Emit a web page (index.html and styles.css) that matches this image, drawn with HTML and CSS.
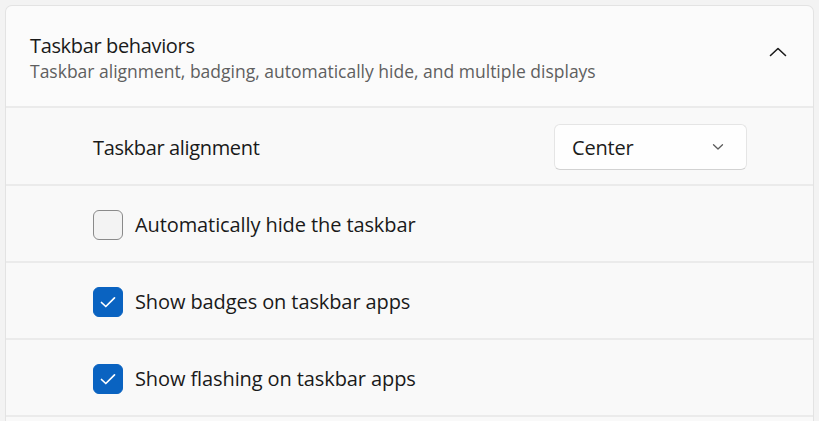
FILE: index.html
```
<!DOCTYPE html>
<html>
<head>
<meta charset="utf-8">
<link rel="stylesheet" href="styles.css">
</head>
<body>
<div class="card">
  <div class="header">
    <div class="htext">
      <div class="title">Taskbar behaviors</div>
      <div class="subtitle">Taskbar alignment, badging, automatically hide, and multiple displays</div>
    </div>
    <svg class="chev-up" width="18" height="10" viewBox="0 0 18 10"><path d="M1.5 8.5 L9 1.5 L16.5 8.5" fill="none" stroke="#1b1b1b" stroke-width="1.6" stroke-linecap="round" stroke-linejoin="round"/></svg>
  </div>
  <div class="row first">
    <div class="label">Taskbar alignment</div>
    <div class="select">
      <span>Center</span>
      <svg width="12" height="8" viewBox="0 0 12 8"><path d="M1.5 1.8 L6 6 L10.5 1.8" fill="none" stroke="#5c5c5c" stroke-width="1.3" stroke-linecap="round" stroke-linejoin="round"/></svg>
    </div>
  </div>
  <div class="row">
    <span class="box"></span>
    <div class="label">Automatically hide the taskbar</div>
  </div>
  <div class="row">
    <span class="box checked"><svg width="18" height="14" viewBox="0 0 18 14"><path d="M2.5 7.5 L6.8 11.5 L15.5 2.8" fill="none" stroke="#fff" stroke-width="1.7" stroke-linecap="round" stroke-linejoin="round"/></svg></span>
    <div class="label">Show badges on taskbar apps</div>
  </div>
  <div class="row">
    <span class="box checked"><svg width="18" height="14" viewBox="0 0 18 14"><path d="M2.5 7.5 L6.8 11.5 L15.5 2.8" fill="none" stroke="#fff" stroke-width="1.7" stroke-linecap="round" stroke-linejoin="round"/></svg></span>
    <div class="label">Show flashing on taskbar apps</div>
  </div>
  <div class="row last"></div>
</div>
</body>
</html>
```
FILE: styles.css
```
* { box-sizing: border-box; }
html, body { margin: 0; padding: 0; }
body {
  background: #f3f3f3;
  font-family: "Open Sans", "Noto Sans", sans-serif;
  color: #1b1b1b;
  width: 819px;
  height: 421px;
  overflow: hidden;
}
.card {
  margin: 5px 5px 0 5px;
  border: 1px solid #e3e3e3;
  border-bottom: none;
  border-radius: 7px 7px 0 0;
  background: #ebebeb;
  display: flex;
  flex-direction: column;
  gap: 2px;
  overflow: hidden;
  height: 416px;
}
.header {
  height: 100px;
  flex: none;
  background: #fbfbfb;
  display: flex;
  align-items: center;
  padding: 0 26px 0 24px;
}
.htext { flex: 1; padding-top: 4px; }
.title {
  font-size: 20px;
  letter-spacing: -0.35px;
  line-height: 26px;
  color: #1a1a1a;
}
.subtitle {
  font-size: 17.5px;
  letter-spacing: 0px;
  line-height: 25px;
  color: #5f5f5f;
}
.chev-up { margin-top: -8px; }
.row {
  height: 75px;
  flex: none;
  background: #f9f9f9;
  display: flex;
  align-items: center;
  padding: 2px 66px 0 87px;
  gap: 12px;
}
.row.first { height: 76px; }
.row.last { flex: 1; height: auto; }
.label {
  font-size: 20px;
  letter-spacing: -0.1px;
  color: #1a1a1a;
  flex: 1;
}
.first .label { letter-spacing: -0.35px; }
.select {
  width: 193px;
  height: 46px;
  background: #fefefe;
  border: 1px solid #e5e5e5;
  border-bottom-color: #d2d2d2;
  border-radius: 6px;
  display: flex;
  align-items: center;
  justify-content: space-between;
  padding: 0 22px 0 17px;
  font-size: 20px;
  letter-spacing: -0.2px;
}
.box {
  width: 30px;
  height: 30px;
  border-radius: 6px;
  border: 1.5px solid #8a8a8a;
  background: #f3f3f3;
  display: flex;
  align-items: center;
  justify-content: center;
  flex: none;
}
.box.checked {
  background: #0a63c1;
  border-color: #0a63c1;
}
```
